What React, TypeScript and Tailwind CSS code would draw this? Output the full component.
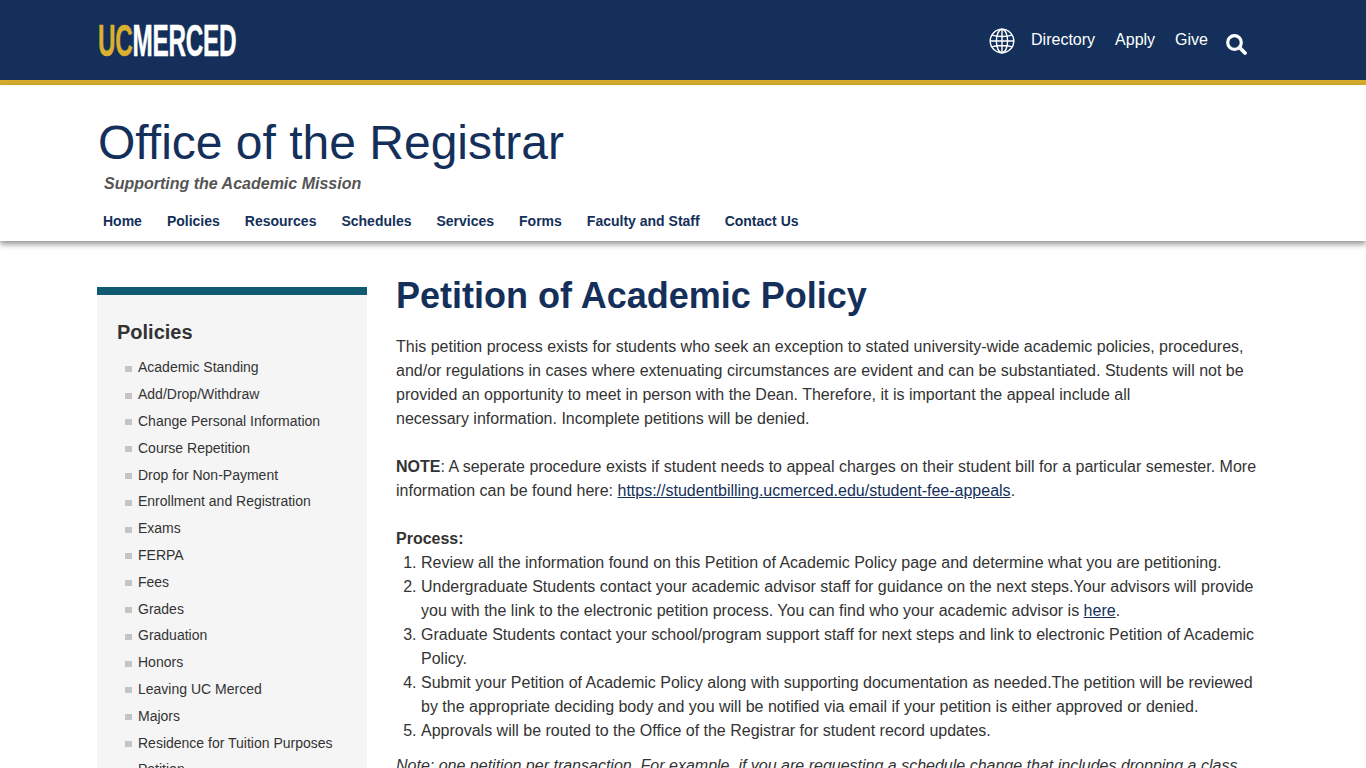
const sideLinks = [
  'Academic Standing',
  'Add/Drop/Withdraw',
  'Change Personal Information',
  'Course Repetition',
  'Drop for Non-Payment',
  'Enrollment and Registration',
  'Exams',
  'FERPA',
  'Fees',
  'Grades',
  'Graduation',
  'Honors',
  'Leaving UC Merced',
  'Majors',
  'Residence for Tuition Purposes',
  'Petition',
];

const navLinks = ['Home', 'Policies', 'Resources', 'Schedules', 'Services', 'Forms', 'Faculty and Staff', 'Contact Us'];

function GlobeIcon() {
  return (
    <svg width="26" height="26" viewBox="0 0 26 26" fill="none" stroke="currentColor" strokeWidth="1.4" className="mr-[16px]">
      <circle cx="13" cy="13" r="11.8" />
      <ellipse cx="13" cy="13" rx="5.6" ry="11.8" />
      <path d="M13 1.2V24.8M1.2 13H24.8M3 7.2C8 8.9 18 8.9 23 7.2M3 18.8C8 17.1 18 17.1 23 18.8" />
    </svg>
  );
}

function SearchIcon() {
  return (
    <svg width="22" height="22" viewBox="0 0 22 22" fill="none" className="text-white">
      <circle cx="9.5" cy="9.5" r="6.8" stroke="currentColor" strokeWidth="3.2" />
      <path d="M14.5 14.5 L20 20" stroke="currentColor" strokeWidth="3.8" strokeLinecap="round" />
    </svg>
  );
}

function Logo() {
  return (
    <div className="w-[140px] h-[36px] overflow-hidden font-['Liberation_Sans',sans-serif] font-bold text-[45px] leading-[36px] whitespace-nowrap [-webkit-text-stroke:0.5px]">
      <span className="inline-block origin-left scale-x-[0.54] tracking-[-0.5px]">
        <span className="text-[#dbb02f]">UC</span>
        <span className="text-white">MERCED</span>
      </span>
    </div>
  );
}

export default function App() {
  return (
    <div className="h-screen overflow-hidden bg-white font-['Liberation_Sans',Arial,sans-serif] text-[#333333]">
      <header className="h-[85px] bg-[#14305a] border-b-[5px] border-[#d8ab2c] pl-[98px] pr-[119px] flex items-start justify-between">
        <div className="pt-[23px]">
          <Logo />
        </div>
        <div className="flex items-center text-white text-base pt-[27px]">
          <GlobeIcon />
          <a className="mr-[20px] -mt-[3px]">Directory</a>
          <a className="mr-[20px] -mt-[3px]">Apply</a>
          <a className="mr-[17px] -mt-[3px]">Give</a>
          <span className="mt-[6px]"><SearchIcon /></span>
        </div>
      </header>

      <div className="h-[156px] pl-[98px] shadow-[0_3px_6px_rgba(0,0,0,0.45)] relative">
        <h2 className="text-[48px] leading-[56px] pt-[30px] text-[#14305a] box-content">Office of the Registrar</h2>
        <p className="pl-[6px] mt-[3px] text-base leading-[20px] font-bold italic text-[#555555]">Supporting the Academic Mission</p>
        <nav className="pl-[5px] mt-[17px] flex gap-[25px] text-sm leading-[20px] font-bold text-[#14305a]">
          {navLinks.map((n) => (
            <a key={n}>{n}</a>
          ))}
        </nav>
      </div>

      <div className="flex pl-[97px] pt-[46px]">
        <aside className="w-[270px] shrink-0 bg-[#f5f5f5] border-t-[8px] border-[#0f5a71] pt-[25px] pl-[20px]">
          <h3 className="text-xl leading-[24px] font-bold text-[#333333]">Policies</h3>
          <ul className="mt-[10px]">
            {sideLinks.map((l) => (
              <li key={l} className="h-[26.8px] flex items-center pl-[8px] text-sm text-[#333333]">
                <span className="w-[7px] h-[6px] bg-[#c4c4c4] mr-[6px] mt-[3px] shrink-0" />
                {l}
              </li>
            ))}
          </ul>
        </aside>

        <main className="ml-[29px] w-[870px] text-base leading-[24px]">
          <h1 className="text-[36px] leading-[44px] font-bold text-[#14305a] -mt-[13px] mb-[17px]">Petition of Academic Policy</h1>
          <p className="mb-[24px]">
            This petition process exists for students who seek an exception to stated university-wide academic policies, procedures,
            and/or regulations in cases where extenuating circumstances are evident and can be substantiated. Students will not be
            provided an opportunity to meet in person with the Dean. Therefore, it is important the appeal include all
            <br />
            necessary information. Incomplete petitions will be denied.
          </p>
          <p className="mb-[24px]">
            <strong>NOTE</strong>: A seperate procedure exists if student needs to appeal charges on their student bill for a particular semester. More
            information can be found here: <a className="text-[#14305a] underline">https://studentbilling.ucmerced.edu/student-fee-appeals</a>.
          </p>
          <p className="font-bold">Process:</p>
          <ol className="list-decimal pl-[25px]">
            <li>Review all the information found on this Petition of Academic Policy page and determine what you are petitioning.</li>
            <li>
              Undergraduate Students contact your academic advisor staff for guidance on the next steps.Your advisors will provide
              you with the link to the electronic petition process. You can find who your academic advisor is <a className="text-[#14305a] underline">here</a>.
            </li>
            <li>Graduate Students contact your school/program support staff for next steps and link to electronic Petition of Academic Policy.</li>
            <li>
              Submit your Petition of Academic Policy along with supporting documentation as needed.The petition will be reviewed
              by the appropriate deciding body and you will be notified via email if your petition is either approved or denied.
            </li>
            <li>Approvals will be routed to the Office of the Registrar for student record updates.</li>
          </ol>
          <p className="italic mt-[11px] whitespace-nowrap">Note: one petition per transaction. For example, if you are requesting a schedule change that includes dropping a class</p>
        </main>
      </div>
    </div>
  );
}
